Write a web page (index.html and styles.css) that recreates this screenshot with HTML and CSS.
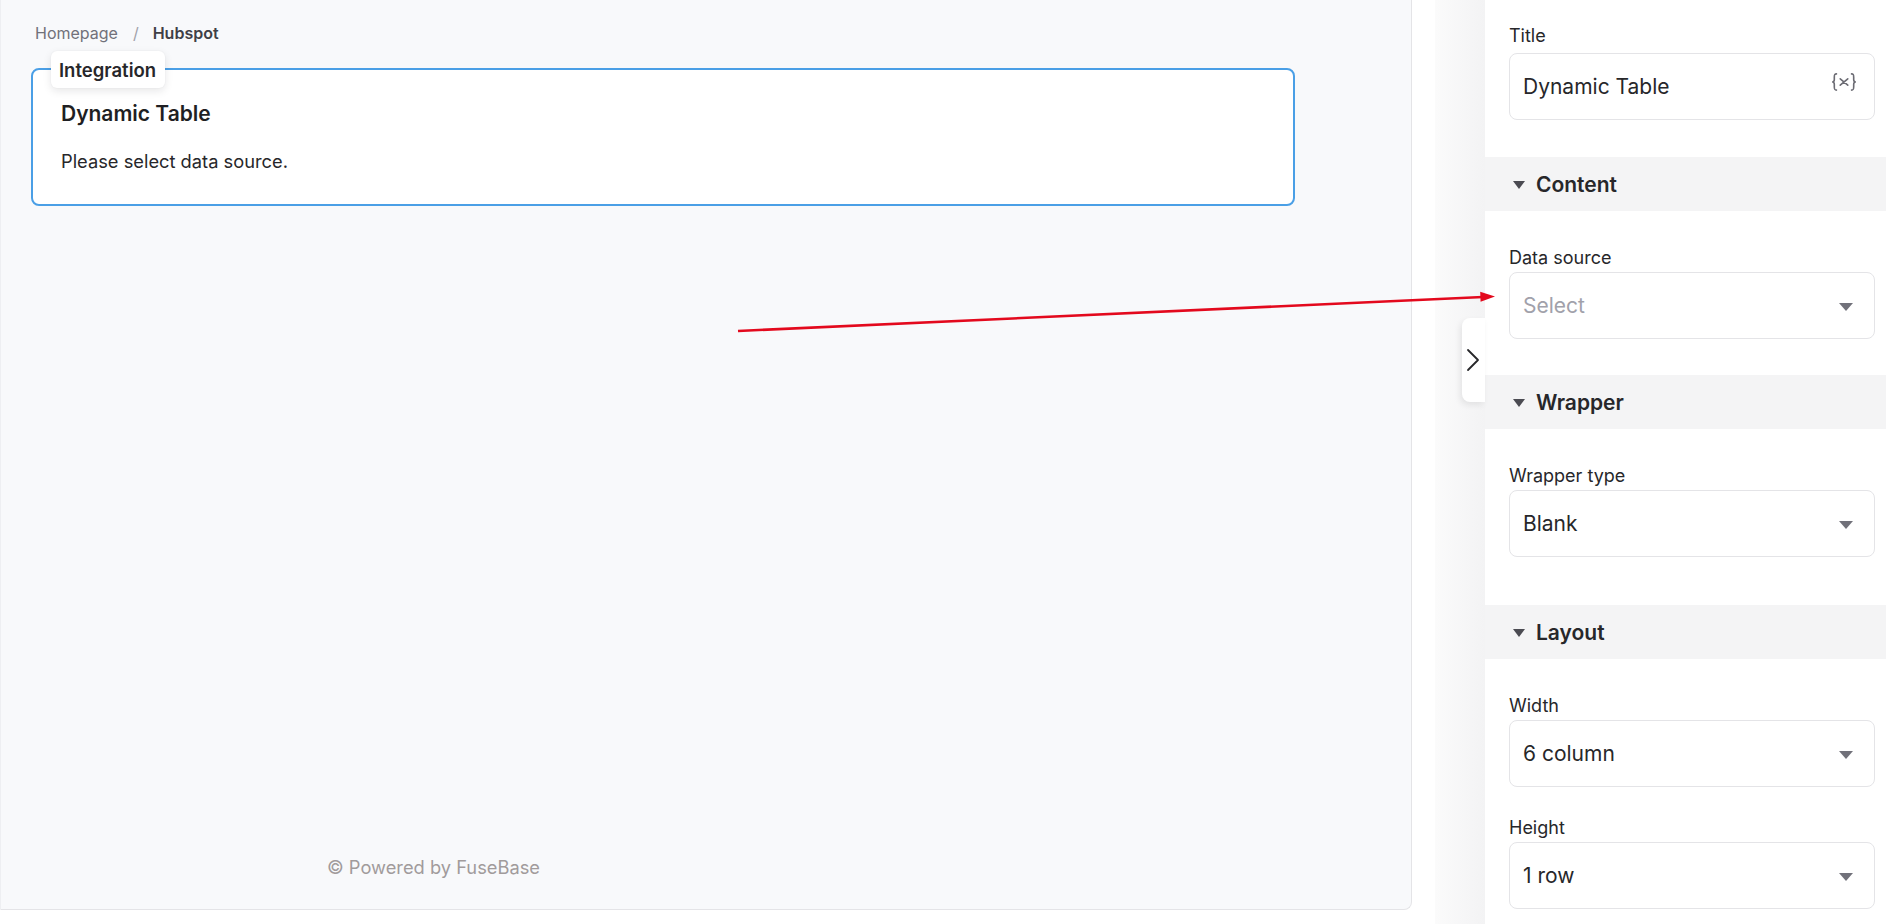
FILE: index.html
```html
<!DOCTYPE html>
<html lang="en">
<head>
<meta charset="utf-8">
<title>Hubspot – Dynamic Table</title>
<link rel="stylesheet" href="styles.css">
</head>
<body>
<div class="app">
  <main class="main">
    <nav class="crumbs">
      <span class="crumb">Homepage</span>
      <span class="crumb-sep">/</span>
      <span class="crumb crumb--current">Hubspot</span>
    </nav>
    <section class="card">
      <span class="tag">Integration</span>
      <h2 class="card-title">Dynamic Table</h2>
      <p class="card-text">Please select data source.</p>
    </section>
    <footer class="footer">© Powered by FuseBase</footer>
  </main>

  <div class="gutter"><div class="gutter-shade"></div></div>

  <aside class="panel">
    <button class="handle" aria-label="Collapse">
      <svg width="14" height="24" viewBox="0 0 14 24"><polyline points="2,2 12,12 2,22" fill="none" stroke="#27272a" stroke-width="1.8" stroke-linecap="round" stroke-linejoin="round"/></svg>
    </button>

    <div class="section-body section-body--top">
      <div class="field">
        <label class="label label--title">Title</label>
        <div class="input">
          <span class="value">Dynamic Table</span>
          <svg class="var-icon" width="28" height="22" viewBox="0 0 26 20">
            <path d="M6 2.5 C4 2.5 4 3.5 4 5.5 V8 C4 9.3 3.3 10 2 10 C3.3 10 4 10.7 4 12 V14.5 C4 16.5 4 17.5 6 17.5" fill="none" stroke="#6b6b73" stroke-width="1.5" stroke-linecap="round"/>
            <path d="M20 2.5 C22 2.5 22 3.5 22 5.5 V8 C22 9.3 22.7 10 24 10 C22.7 10 22 10.7 22 12 V14.5 C22 16.5 22 17.5 20 17.5" fill="none" stroke="#6b6b73" stroke-width="1.5" stroke-linecap="round"/>
            <path d="M9.5 7 L16.5 13 M16.5 7 L9.5 13" stroke="#6b6b73" stroke-width="1.5" stroke-linecap="round"/>
          </svg>
        </div>
      </div>
    </div>

    <div class="section-head">
      <span class="caret"></span><span class="section-name">Content</span>
    </div>
    <div class="section-body">
      <div class="field">
        <label class="label">Data source</label>
        <div class="input select">
          <span class="value value--placeholder">Select</span>
          <span class="drop"></span>
        </div>
      </div>
    </div>

    <div class="section-head">
      <span class="caret"></span><span class="section-name">Wrapper</span>
    </div>
    <div class="section-body section-body--wide">
      <div class="field">
        <label class="label">Wrapper type</label>
        <div class="input select">
          <span class="value">Blank</span>
          <span class="drop"></span>
        </div>
      </div>
    </div>

    <div class="section-head">
      <span class="caret"></span><span class="section-name">Layout</span>
    </div>
    <div class="section-body">
      <div class="field">
        <label class="label">Width</label>
        <div class="input select">
          <span class="value">6 column</span>
          <span class="drop"></span>
        </div>
      </div>
      <div class="field">
        <label class="label">Height</label>
        <div class="input select">
          <span class="value">1 row</span>
          <span class="drop"></span>
        </div>
      </div>
    </div>
  </aside>

  <svg class="arrow" width="1886" height="924" viewBox="0 0 1886 924">
    <line x1="738" y1="331" x2="1483" y2="297" stroke="#e3091d" stroke-width="2.6"/>
    <polygon points="1495,296.5 1480.6,301.8 1480.2,291.8" fill="#e3091d"/>
  </svg>
</div>
</body>
</html>
```

FILE: styles.css
```css
* { box-sizing: border-box; }

html, body {
  margin: 0;
  padding: 0;
  background: #ffffff;
}

body {
  font-family: Inter, "Noto Sans", "Liberation Sans", sans-serif;
  color: #27272a;
  width: 1886px;
  height: 924px;
  overflow: hidden;
}

.app {
  position: relative;
  display: flex;
  align-items: flex-start;
  height: 924px;
}

/* ---------- main canvas ---------- */
.main {
  width: 1412px;
  height: 910px;
  flex: none;
  background: #f8f9fb;
  border-right: 1px solid #e4e4e7;
  border-bottom: 1px solid #e4e4e7;
  border-left: 1px solid #eeeff2;
  border-bottom-right-radius: 8px;
  display: flex;
  flex-direction: column;
}

.crumbs {
  height: 68px;
  padding: 23px 0 0 34px;
  display: flex;
  align-items: flex-start;
  font-size: 16px;
  line-height: 20px;
}

.crumb { color: #71717a; }
.crumb-sep { color: #a1a1aa; margin: 0 14px 0 15px; }
.crumb--current { color: #3f3f46; font-weight: 600; }

.card {
  position: relative;
  margin-left: 30px;
  width: 1264px;
  background: #ffffff;
  border: 2px solid #4a9fe6;
  border-radius: 8px;
  padding: 30px 28px 31px;
}

.tag {
  position: absolute;
  top: -19px;
  left: 18px;
  height: 37px;
  padding: 0 9px 0 8px;
  display: flex;
  align-items: center;
  background: #ffffff;
  border-radius: 6px;
  box-shadow: 0 3px 8px rgba(24, 24, 27, 0.10), 0 0 2px rgba(24, 24, 27, 0.06);
  font-size: 18.5px;
  font-weight: 600;
  color: #27272a;
}

.card-title {
  margin: 0;
  font-size: 21px;
  line-height: 28px;
  font-weight: 600;
  color: #1f1f23;
}

.card-text {
  margin: 21px 0 0;
  font-size: 18.3px;
  line-height: 24px;
  color: #27272a;
}

.footer {
  margin-top: auto;
  padding: 0 0 30px 326px;
  font-size: 18.3px;
  line-height: 24px;
  color: #a19b9b;
}

/* ---------- gutter / shadow ---------- */
.gutter {
  width: 73px;
  height: 924px;
  flex: none;
  display: flex;
  justify-content: flex-end;
}

.gutter-shade {
  width: 50px;
  height: 100%;
  background: linear-gradient(to right, #fbfbfb 0%, #f6f6f7 60%, #f3f3f4 100%);
}

/* ---------- settings panel ---------- */
.panel {
  position: relative;
  width: 401px;
  flex: none;
  height: 924px;
  background: #ffffff;
  padding-top: 25px;
}

.handle {
  position: absolute;
  left: -23px;
  top: 318px;
  width: 23px;
  height: 84px;
  padding: 0 0 0 4px;
  border: 0;
  background: #ffffff;
  border-radius: 8px 0 0 8px;
  box-shadow: -2px 3px 6px rgba(0, 0, 0, 0.08);
  display: flex;
  align-items: center;
}

.section-body {
  padding: 35px 11px 36px 24px;
  display: flex;
  flex-direction: column;
  gap: 29px;
}

.section-body--top { padding-top: 0; padding-bottom: 37px; }
.section-body--wide { padding-bottom: 48px; }

.section-head {
  height: 54px;
  background: #f4f4f5;
  display: flex;
  align-items: center;
  padding-left: 28px;
}

.caret {
  width: 0;
  height: 0;
  border-left: 6.5px solid transparent;
  border-right: 6.5px solid transparent;
  border-top: 8px solid #4b4b52;
  margin-right: 11px;
  margin-top: 1px;
}

.section-name {
  font-size: 21px;
  font-weight: 600;
  color: #27272a;
  line-height: 28px;
  padding-top: 1px;
}

.field {
  display: flex;
  flex-direction: column;
  gap: 3px;
}

.label {
  font-size: 18px;
  line-height: 22px;
  padding-top: 1px;
  color: #27272a;
}

.label--title { margin-bottom: 3px; padding-top: 0; }

.input {
  height: 67px;
  border: 1px solid #e4e4e7;
  border-radius: 8px;
  display: flex;
  align-items: center;
  justify-content: space-between;
  padding: 0 16px 0 13px;
}

.select { padding-right: 21px; }

.value {
  font-size: 21px;
  line-height: 28px;
  color: #27272a;
}

.value--placeholder { color: #a1a1aa; }

.var-icon { margin-top: -10px; }

.drop {
  width: 0;
  height: 0;
  border-left: 7px solid transparent;
  border-right: 7px solid transparent;
  border-top: 8px solid #71717a;
  margin-top: 2px;
}

/* ---------- annotation arrow ---------- */
.arrow {
  position: absolute;
  left: 0;
  top: 0;
  pointer-events: none;
}
```
